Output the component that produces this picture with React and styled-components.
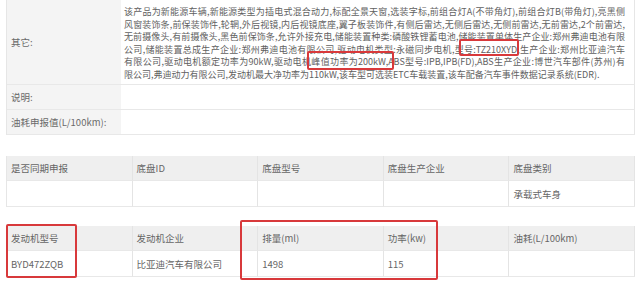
import React from 'react'
import styled, { createGlobalStyle } from 'styled-components'

const GlobalStyle = createGlobalStyle`
	html, body {
		margin: 0;
		padding: 0;
		background: #ffffff;
	}
	body {
		font-family: "Noto Sans CJK SC", "Noto Sans", sans-serif;
		color: #666666;
	}
`

const Page = styled.div`
	position: relative;
	width: 640px;
	height: 283px;
	overflow: hidden;
	padding-left: 6px;
	box-sizing: border-box;
`

const InfoTable = styled.div`
	display: grid;
	grid-template-columns: 114px 514px;
	width: 628px;
	border-left: 1px solid #e6e6e6;
`

const Label = styled.div`
	background: #f4f4f4;
	font-size: 9.5px;
	color: #6a6a6a;
	display: flex;
	align-items: center;
	padding-left: 4px;
	height: ${props => props.$h}px;
	border-bottom: 1px solid #e8e8e8;
	box-sizing: border-box;
`

const Value = styled.div`
	font-size: 9px;
	line-height: 12.6px;
	color: #616161;
	padding: ${props => (props.$text ? '6px 9px 0 3px' : '0')};
	height: ${props => props.$h}px;
	border-bottom: 1px solid #e8e8e8;
	border-right: 1px solid #e6e6e6;
	box-sizing: border-box;
`

const Line = styled.div`
	white-space: nowrap;
	text-align: ${props => (props.$last ? 'left' : 'justify')};
	text-align-last: ${props => (props.$last ? 'left' : 'justify')};
`

const Grid = styled.div`
	display: grid;
	grid-template-columns: repeat(5, 1fr);
	width: 628px;
	margin-top: ${props => props.$top}px;
	border-left: 1px solid #e6e6e6;
`

const Cell = styled.div`
	height: ${props => (props.$head ? 25 : 26)}px;
	background: ${props => (props.$head ? '#efefef' : '#ffffff')};
	font-size: 9.5px;
	color: #666666;
	display: flex;
	align-items: center;
	padding-left: 4px;
	border-right: 1px solid #e4e4e4;
	border-bottom: 1px solid #e8e8e8;
	box-sizing: border-box;
	white-space: nowrap;
`

const Mark = styled.div`
	position: absolute;
	left: ${props => props.$x}px;
	top: ${props => props.$y}px;
	width: ${props => props.$w}px;
	height: ${props => props.$h}px;
	border: 2px solid #d8393b;
	border-radius: 2px;
	box-sizing: border-box;
	pointer-events: none;
`

const otherLines = [
	'该产品为新能源车辆,新能源类型为插电式混合动力,标配全景天窗,选装字标,前组合灯A(不带角灯),前组合灯B(带角灯),亮黑侧',
	'风窗装饰条,前保装饰件,轮辋,外后视镜,内后视镜底座,翼子板装饰件,有侧后雷达,无侧后雷达,无侧前雷达,无前雷达,2个前雷达,',
	'无前摄像头,有前摄像头,黑色前保饰条,允许外接充电,储能装置种类:磷酸铁锂蓄电池,储能装置单体生产企业:郑州弗迪电池有限',
	'公司,储能装置总成生产企业:郑州弗迪电池有限公司,驱动电机类型:永磁同步电机,型号:TZ210XYD,生产企业:郑州比亚迪汽车',
	'有限公司,驱动电机额定功率为90kW,驱动电机峰值功率为200kW,ABS型号:IPB,IPB(FD),ABS生产企业:博世汽车部件(苏州)有',
	'限公司,弗迪动力有限公司,发动机最大净功率为110kW,该车型可选装ETC车载装置,该车配备汽车事件数据记录系统(EDR).',
]

const chassis = [
	['是否同期申报', '底盘ID', '底盘型号', '底盘生产企业', '底盘类别'],
	['', '', '', '', '承载式车身'],
]

const engine = [
	['发动机型号', '发动机企业', '排量(ml)', '功率(kw)', '油耗(L/100km)'],
	['BYD472ZQB', '比亚迪汽车有限公司', '1498', '115', ''],
]

const DataGrid = ({ rows, top }) => (
	<Grid $top={top}>
		{rows.map((row, r) =>
			row.map((text, c) => (
				<Cell key={r + '-' + c} $head={r === 0}>{text}</Cell>
			))
		)}
	</Grid>
)

const App = () => {
	return (
		<Page>
			<GlobalStyle />
			<InfoTable>
				<Label $h={85}>其它:</Label>
				<Value $h={85} $text>
					{otherLines.map((line, i) => (
						<Line key={i} $last={i === otherLines.length - 1}>{line}</Line>
					))}
				</Value>
				<Label $h={25}>说明:</Label>
				<Value $h={25} />
				<Label $h={25}>油耗申报值(L/100km):</Label>
				<Value $h={25} />
			</InfoTable>
			<DataGrid rows={chassis} top={21} />
			<DataGrid rows={engine} top={19} />

			<Mark $x={459} $y={39} $w={60} $h={17} />
			<Mark $x={307} $y={51} $w={87} $h={19} />
			<Mark $x={6} $y={224} $w={71} $h={54} />
			<Mark $x={240} $y={220} $w={198} $h={60} />
		</Page>
	)
}

export default App
